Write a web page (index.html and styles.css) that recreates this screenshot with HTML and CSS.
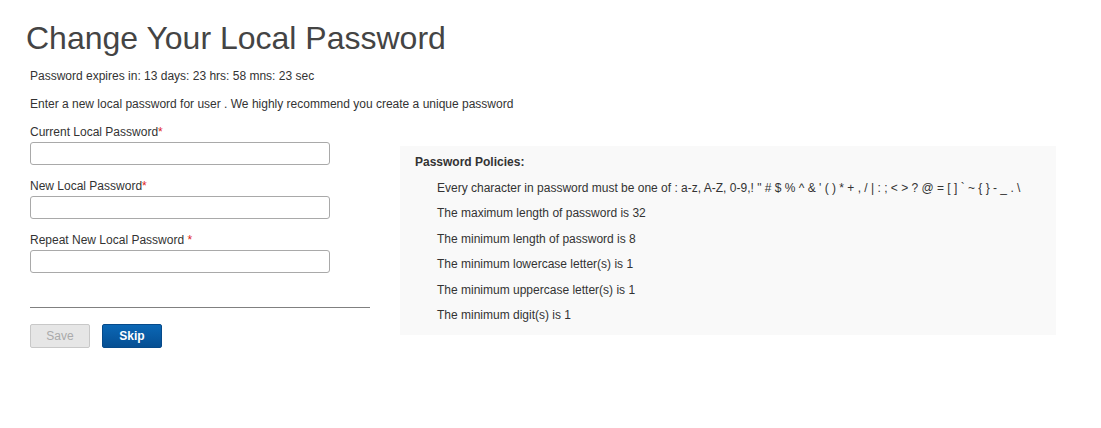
FILE: index.html
```html
<!DOCTYPE html>
<html>
<head>
<meta charset="utf-8">
<link rel="stylesheet" href="styles.css">
</head>
<body>
<div class="page">
  <h1 class="title">Change Your Local Password</h1>
  <p class="info">Password expires in: 13 days: 23 hrs: 58 mns: 23 sec</p>
  <p class="info intro">Enter a new local password for user . We highly recommend you create a unique password</p>
  <div class="main">
    <form class="form">
      <div class="field">
        <label class="label">Current Local Password<span class="req">*</span></label>
        <input class="input" type="password">
      </div>
      <div class="field">
        <label class="label">New Local Password<span class="req">*</span></label>
        <input class="input" type="password">
      </div>
      <div class="field">
        <label class="label">Repeat New Local Password <span class="req">*</span></label>
        <input class="input" type="password">
      </div>
      <hr class="divider">
      <div class="actions">
        <button type="button" class="btn btn-save" disabled>Save</button>
        <button type="button" class="btn btn-skip">Skip</button>
      </div>
    </form>
    <div class="policies">
      <div class="policies-title">Password Policies:</div>
      <ul class="policy-list">
        <li>Every character in password must be one of : a-z, A-Z, 0-9,! " # $ % ^ &amp; ' ( ) * + , / | : ; &lt; &gt; ? @ = [ ] ` ~ { } - _ . \</li>
        <li>The maximum length of password is 32</li>
        <li>The minimum length of password is 8</li>
        <li>The minimum lowercase letter(s) is 1</li>
        <li>The minimum uppercase letter(s) is 1</li>
        <li>The minimum digit(s) is 1</li>
      </ul>
    </div>
  </div>
</div>
</body>
</html>
```

FILE: styles.css
```css
html, body {
  margin: 0;
  padding: 0;
  background: #fff;
}
body {
  font-family: "Liberation Sans", Arial, sans-serif;
  font-size: 12px;
  color: #333;
}
.page {
  padding: 18px 0 0 30px;
}
.title {
  margin: 0 0 0 -4px;
  font-size: 32px;
  font-weight: normal;
  color: #444;
  line-height: 40px;
}
.info {
  margin: 11px 0 0 0;
  line-height: 14px;
}
.intro {
  margin-top: 14px;
}
.main {
  display: flex;
  align-items: flex-start;
  margin-top: 14px;
}
.form {
  width: 340px;
  display: flex;
  flex-direction: column;
}
.field {
  display: flex;
  flex-direction: column;
  margin-bottom: 14px;
}
.label {
  line-height: 14px;
  margin-bottom: 3px;
}
.req {
  color: #e0241b;
}
.input {
  box-sizing: border-box;
  width: 300px;
  height: 23px;
  border: 1px solid #a9a9a9;
  border-radius: 3px;
  margin: 0;
  padding: 2px 4px;
  font: inherit;
}
.divider {
  width: 340px;
  margin: 20px 0 0 0;
  border: 0;
  border-top: 1px solid #808080;
  height: 0;
}
.actions {
  display: flex;
  gap: 12px;
  margin-top: 16px;
}
.btn {
  box-sizing: border-box;
  width: 60px;
  height: 24px;
  border-radius: 2px;
  font: inherit;
  font-size: 12px;
  padding: 0;
}
.btn-save {
  background: #e6e6e6;
  border: 1px solid #c8c8c8;
  color: #aaa;
}
.btn-skip {
  background: linear-gradient(#0b67b5, #064f93);
  border: 1px solid #064a8a;
  color: #fff;
  font-weight: bold;
}
.policies {
  margin: 21px 0 0 30px;
  width: 656px;
  box-sizing: border-box;
  background: #f9f9f9;
  padding: 9px 15px 9px 15px;
  min-height: 189px;
}
.policies-title {
  font-weight: bold;
  line-height: 14px;
  margin-top: 0;
}
.policy-list {
  list-style: none;
  margin: 0;
  padding: 0 0 0 22px;
}
.policy-list li {
  line-height: 14px;
  margin-top: 11.5px;
}
```
